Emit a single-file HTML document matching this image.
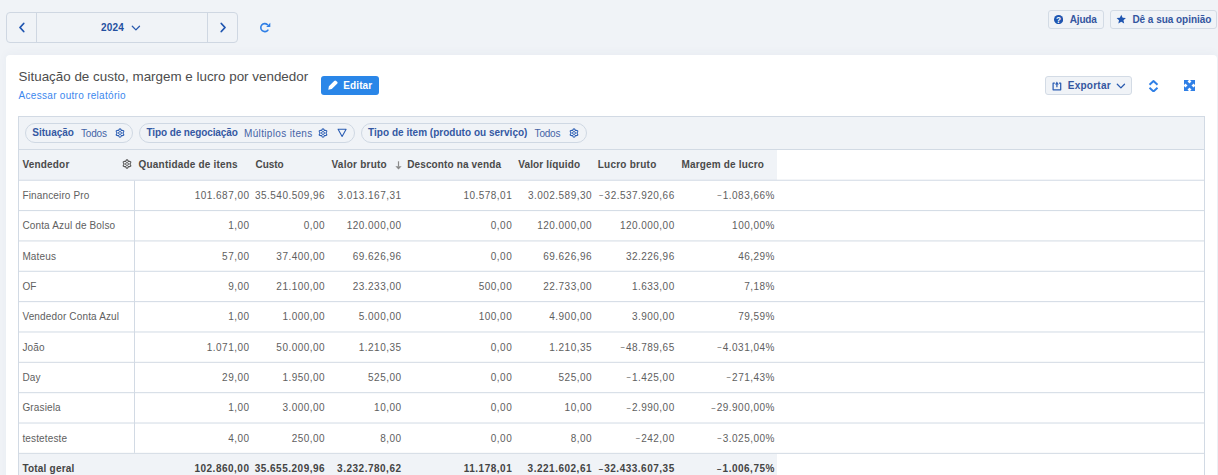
<!DOCTYPE html>
<html><head><meta charset="utf-8"><style>
*{margin:0;padding:0;box-sizing:border-box}
html,body{width:1218px;height:475px;overflow:hidden;background:#f0f3f7;font-family:"Liberation Sans",sans-serif;position:relative}
.a{position:absolute;display:block}
.grp{position:absolute;left:6px;top:12px;width:232px;height:30.6px;border:1px solid #cfd7e2;border-radius:4px}
.vd{position:absolute;top:0;bottom:0;width:1px;background:#cfd7e2}
.card{position:absolute;left:6px;top:54.8px;width:1211px;height:460px;background:#fff;border-radius:4px;box-shadow:0 -2px 10px rgba(60,80,120,.04)}
.title{position:absolute;left:18.6px;top:69px;font-size:13.4px;letter-spacing:0px;color:#4d4d4d;white-space:nowrap;line-height:15px}
.link{position:absolute;left:18.6px;top:89.7px;font-size:10px;letter-spacing:0.29px;color:#3b87ee;white-space:nowrap;line-height:12px}
.btn{position:absolute;border:1px solid #d3dbe5;border-radius:3px;background:#f0f3f7}
.bt{position:absolute;font-size:10px;font-weight:bold;color:#3456a0;line-height:12px;white-space:nowrap}
.tbl{position:absolute;left:18px;top:116px;width:1187px;height:400px;border:1px solid #d2dae4;background:#fff}
.fbar{position:absolute;left:19px;top:117px;width:1185px;height:32px;background:#f0f3f7}
.hdr{position:absolute;left:19px;top:150px;width:758px;height:30px;background:#f0f3f7}
.hl{position:absolute;left:19px;width:1185px;height:1px;background:#d2dae4}
.chip{position:absolute;top:123px;height:19.5px;border:1px solid #cfd8e3;border-radius:10px}
.t{position:absolute;font-size:10px;line-height:12px;color:#606060;white-space:nowrap}
.b{font-weight:bold;color:#444}
.mn{font-size:8px;position:relative;top:-0.6px;margin-right:0.4px}
.h{position:absolute;font-size:10px;line-height:12px;color:#4a4a4a;font-weight:bold;white-space:nowrap;top:159px}
.cl{position:absolute;font-size:10px;line-height:12px;color:#3459a3;font-weight:bold;white-space:nowrap;top:127px}
.cv{position:absolute;font-size:10px;line-height:12px;color:#4563a6;white-space:nowrap;top:127.5px}
</style></head><body>
<div class="grp"><div class="vd" style="left:29px"></div><div class="vd" style="left:199.5px"></div></div>
<svg class="a" style="left:18px;top:22px" width="8" height="11" viewBox="0 0 8 11"><path d="M5.7 1.5L2 5.5 5.7 9.5" fill="none" stroke="#1f55b0" stroke-width="1.8" stroke-linecap="round" stroke-linejoin="round"/></svg>
<div class="bt" style="left:101px;top:21.5px;color:#2450a0;letter-spacing:0.23px">2024</div>
<svg class="a" style="left:131.3px;top:24.5px" width="10" height="7" viewBox="0 0 10 7"><path d="M1.3 1.3L4.9 4.9 8.5 1.3" fill="none" stroke="#2a5aae" stroke-width="1.3" stroke-linecap="round" stroke-linejoin="round"/></svg>
<svg class="a" style="left:218.5px;top:22px" width="8" height="11" viewBox="0 0 8 11"><path d="M2.3 1.5L6 5.5 2.3 9.5" fill="none" stroke="#1f55b0" stroke-width="1.8" stroke-linecap="round" stroke-linejoin="round"/></svg>
<svg class="a" style="left:258.5px;top:21.8px" width="13" height="12" viewBox="0 0 13 12"><path d="M8.86 8.17A4 4 0 1 1 8.37 2.54" fill="none" stroke="#2f7fe6" stroke-width="1.6" stroke-linecap="round"/><path d="M7.2 5H11.3V0.8z" fill="#2f7fe6"/></svg>

<div class="btn" style="left:1048px;top:10px;width:56px;height:18.5px"></div>
<svg class="a" style="left:1054.2px;top:14.6px" width="9.2" height="9.2" viewBox="0 0 10 10"><circle cx="5" cy="5" r="5" fill="#1f55b0"/><text x="5" y="8.4" font-size="9" font-weight="bold" text-anchor="middle" fill="#fff" font-family="Liberation Sans">?</text></svg>
<div class="bt" style="left:1069.7px;top:13.5px;letter-spacing:-0.15px">Ajuda</div>
<div class="btn" style="left:1110px;top:10px;width:106.6px;height:18.5px"></div>
<svg class="a" style="left:1116px;top:13.8px" width="10.5" height="10.5" viewBox="0 0 24 24"><path d="M12 1.5l3.2 6.9 7.5.8-5.6 5.1 1.6 7.4L12 17.9 5.3 21.7l1.6-7.4L1.3 9.2l7.5-.8z" fill="#1f55b0"/></svg>
<div class="bt" style="left:1132.4px;top:13.5px;letter-spacing:-0.03px">Dê a sua opinião</div>

<div class="card"></div>
<div class="title">Situação de custo, margem e lucro por vendedor</div>
<div class="link">Acessar outro relatório</div>
<div class="a" style="left:321px;top:76.4px;width:58px;height:18.6px;background:#2a86e8;border-radius:3px"></div>
<svg class="a" style="left:327.6px;top:80.4px" width="10" height="10" viewBox="0 0 10 10"><path d="M0.3 9.7L0.9 6.2 6.2 0.9Q7.2 -0.1 8.2 0.9L9.1 1.8Q10.1 2.8 9.1 3.8L3.8 9.1z" fill="#fff"/></svg>
<div class="bt" style="left:343.3px;top:80px;color:#fff;letter-spacing:0.1px">Editar</div>

<div class="btn" style="left:1045.4px;top:76.2px;width:86.5px;height:18.5px"></div>
<svg class="a" style="left:1051.5px;top:80.5px" width="10" height="10" viewBox="0 0 10 10"><path d="M2.8 2.2H1.1V8.8H8.7V2.2H7" fill="none" stroke="#2b5db3" stroke-width="1.25" stroke-linejoin="round"/><path d="M4.9 6.3V2.5" fill="none" stroke="#2b5db3" stroke-width="1.25"/><path d="M3 3.4L4.9 0.6 6.8 3.4z" fill="#2b5db3"/></svg>
<div class="bt" style="left:1067.8px;top:79.8px;letter-spacing:0.24px">Exportar</div>
<svg class="a" style="left:1115.5px;top:83px" width="10" height="7" viewBox="0 0 10 7"><path d="M1.3 1.3L4.9 4.9 8.5 1.3" fill="none" stroke="#2a5aae" stroke-width="1.3" stroke-linecap="round" stroke-linejoin="round"/></svg>
<svg class="a" style="left:1148px;top:79.5px" width="11" height="12.5" viewBox="0 0 11 12.5"><path d="M1.5 4.8L5.5 1 9.5 4.8M1.5 7.7L5.5 11.5 9.5 7.7" fill="none" stroke="#2f7fe6" stroke-width="1.9" stroke-linejoin="round"/></svg>
<svg class="a" style="left:1184px;top:80px" width="11" height="11" viewBox="0 0 11 11"><path d="M0 0h5L0 5zM11 0v5L6 0zM0 11V6L5 11zM11 11H6L11 6z" fill="#2f7fe6"/><path d="M1.5 1.5L9.5 9.5M9.5 1.5L1.5 9.5" stroke="#2f7fe6" stroke-width="3"/></svg>

<div class="tbl"></div>
<div class="fbar"></div>
<div class="hl" style="top:149px"></div>
<div class="chip" style="left:25px;width:107.5px"></div>
<div class="cl" style="left:32.3px;letter-spacing:0px">Situação</div>
<div class="cv" style="left:81px;letter-spacing:-0.2px">Todos</div>
<svg class="a" style="left:114.7px;top:127.6px" width="10" height="10" viewBox="0 0 10 10"><path d="M5.00 0.80 L5.36 0.90 L5.68 1.16 L5.93 1.52 L6.13 1.90 L6.30 2.21 L6.50 2.40 L6.77 2.48 L7.12 2.47 L7.55 2.45 L7.99 2.49 L8.37 2.64 L8.64 2.90 L8.73 3.26 L8.66 3.67 L8.48 4.07 L8.25 4.43 L8.07 4.73 L8.00 5.00 L8.07 5.27 L8.25 5.57 L8.48 5.93 L8.66 6.33 L8.73 6.74 L8.64 7.10 L8.37 7.36 L7.99 7.51 L7.55 7.55 L7.12 7.53 L6.77 7.52 L6.50 7.60 L6.30 7.79 L6.13 8.10 L5.93 8.48 L5.68 8.84 L5.36 9.10 L5.00 9.20 L4.64 9.10 L4.32 8.84 L4.07 8.48 L3.87 8.10 L3.70 7.79 L3.50 7.60 L3.23 7.52 L2.88 7.53 L2.45 7.55 L2.01 7.51 L1.63 7.36 L1.36 7.10 L1.27 6.74 L1.34 6.33 L1.52 5.93 L1.75 5.57 L1.93 5.27 L2.00 5.00 L1.93 4.73 L1.75 4.43 L1.52 4.07 L1.34 3.67 L1.27 3.26 L1.36 2.90 L1.63 2.64 L2.01 2.49 L2.45 2.45 L2.88 2.47 L3.23 2.48 L3.50 2.40 L3.70 2.21 L3.87 1.90 L4.07 1.52 L4.32 1.16 L4.64 0.90 L5.00 0.80Z" fill="none" stroke="#2b5db3" stroke-width="1.15"/><circle cx="5" cy="5" r="1.45" fill="none" stroke="#2b5db3" stroke-width="0.95"/></svg>
<div class="chip" style="left:139px;width:215.5px"></div>
<div class="cl" style="left:146.5px;letter-spacing:-0.11px">Tipo de negociação</div>
<div class="cv" style="left:244px;letter-spacing:0.35px">Múltiplos itens</div>
<svg class="a" style="left:318.4px;top:127.6px" width="10" height="10" viewBox="0 0 10 10"><path d="M5.00 0.80 L5.36 0.90 L5.68 1.16 L5.93 1.52 L6.13 1.90 L6.30 2.21 L6.50 2.40 L6.77 2.48 L7.12 2.47 L7.55 2.45 L7.99 2.49 L8.37 2.64 L8.64 2.90 L8.73 3.26 L8.66 3.67 L8.48 4.07 L8.25 4.43 L8.07 4.73 L8.00 5.00 L8.07 5.27 L8.25 5.57 L8.48 5.93 L8.66 6.33 L8.73 6.74 L8.64 7.10 L8.37 7.36 L7.99 7.51 L7.55 7.55 L7.12 7.53 L6.77 7.52 L6.50 7.60 L6.30 7.79 L6.13 8.10 L5.93 8.48 L5.68 8.84 L5.36 9.10 L5.00 9.20 L4.64 9.10 L4.32 8.84 L4.07 8.48 L3.87 8.10 L3.70 7.79 L3.50 7.60 L3.23 7.52 L2.88 7.53 L2.45 7.55 L2.01 7.51 L1.63 7.36 L1.36 7.10 L1.27 6.74 L1.34 6.33 L1.52 5.93 L1.75 5.57 L1.93 5.27 L2.00 5.00 L1.93 4.73 L1.75 4.43 L1.52 4.07 L1.34 3.67 L1.27 3.26 L1.36 2.90 L1.63 2.64 L2.01 2.49 L2.45 2.45 L2.88 2.47 L3.23 2.48 L3.50 2.40 L3.70 2.21 L3.87 1.90 L4.07 1.52 L4.32 1.16 L4.64 0.90 L5.00 0.80Z" fill="none" stroke="#2b5db3" stroke-width="1.15"/><circle cx="5" cy="5" r="1.45" fill="none" stroke="#2b5db3" stroke-width="0.95"/></svg>
<svg class="a" style="left:336.5px;top:128px" width="10" height="10" viewBox="0 0 10 10"><path d="M1.1 1.3H9.1L5.1 8.4Z" fill="none" stroke="#2b5db3" stroke-width="1.1" stroke-linejoin="round"/></svg>
<div class="chip" style="left:361px;width:225.7px"></div>
<div class="cl" style="left:368.1px;letter-spacing:0.02px">Tipo de item (produto ou serviço)</div>
<div class="cv" style="left:534.6px;letter-spacing:-0.2px">Todos</div>
<svg class="a" style="left:568.5px;top:127.6px" width="10" height="10" viewBox="0 0 10 10"><path d="M5.00 0.80 L5.36 0.90 L5.68 1.16 L5.93 1.52 L6.13 1.90 L6.30 2.21 L6.50 2.40 L6.77 2.48 L7.12 2.47 L7.55 2.45 L7.99 2.49 L8.37 2.64 L8.64 2.90 L8.73 3.26 L8.66 3.67 L8.48 4.07 L8.25 4.43 L8.07 4.73 L8.00 5.00 L8.07 5.27 L8.25 5.57 L8.48 5.93 L8.66 6.33 L8.73 6.74 L8.64 7.10 L8.37 7.36 L7.99 7.51 L7.55 7.55 L7.12 7.53 L6.77 7.52 L6.50 7.60 L6.30 7.79 L6.13 8.10 L5.93 8.48 L5.68 8.84 L5.36 9.10 L5.00 9.20 L4.64 9.10 L4.32 8.84 L4.07 8.48 L3.87 8.10 L3.70 7.79 L3.50 7.60 L3.23 7.52 L2.88 7.53 L2.45 7.55 L2.01 7.51 L1.63 7.36 L1.36 7.10 L1.27 6.74 L1.34 6.33 L1.52 5.93 L1.75 5.57 L1.93 5.27 L2.00 5.00 L1.93 4.73 L1.75 4.43 L1.52 4.07 L1.34 3.67 L1.27 3.26 L1.36 2.90 L1.63 2.64 L2.01 2.49 L2.45 2.45 L2.88 2.47 L3.23 2.48 L3.50 2.40 L3.70 2.21 L3.87 1.90 L4.07 1.52 L4.32 1.16 L4.64 0.90 L5.00 0.80Z" fill="none" stroke="#2b5db3" stroke-width="1.15"/><circle cx="5" cy="5" r="1.45" fill="none" stroke="#2b5db3" stroke-width="0.95"/></svg>

<div class="hdr"></div>
<div class="h" style="left:22.4px;letter-spacing:0.19px">Vendedor</div>
<svg class="a" style="left:122.4px;top:159.4px" width="10" height="10" viewBox="0 0 10 10"><path d="M5.00 0.80 L5.36 0.90 L5.68 1.16 L5.93 1.52 L6.13 1.90 L6.30 2.21 L6.50 2.40 L6.77 2.48 L7.12 2.47 L7.55 2.45 L7.99 2.49 L8.37 2.64 L8.64 2.90 L8.73 3.26 L8.66 3.67 L8.48 4.07 L8.25 4.43 L8.07 4.73 L8.00 5.00 L8.07 5.27 L8.25 5.57 L8.48 5.93 L8.66 6.33 L8.73 6.74 L8.64 7.10 L8.37 7.36 L7.99 7.51 L7.55 7.55 L7.12 7.53 L6.77 7.52 L6.50 7.60 L6.30 7.79 L6.13 8.10 L5.93 8.48 L5.68 8.84 L5.36 9.10 L5.00 9.20 L4.64 9.10 L4.32 8.84 L4.07 8.48 L3.87 8.10 L3.70 7.79 L3.50 7.60 L3.23 7.52 L2.88 7.53 L2.45 7.55 L2.01 7.51 L1.63 7.36 L1.36 7.10 L1.27 6.74 L1.34 6.33 L1.52 5.93 L1.75 5.57 L1.93 5.27 L2.00 5.00 L1.93 4.73 L1.75 4.43 L1.52 4.07 L1.34 3.67 L1.27 3.26 L1.36 2.90 L1.63 2.64 L2.01 2.49 L2.45 2.45 L2.88 2.47 L3.23 2.48 L3.50 2.40 L3.70 2.21 L3.87 1.90 L4.07 1.52 L4.32 1.16 L4.64 0.90 L5.00 0.80Z" fill="none" stroke="#5a5a5a" stroke-width="1.2"/><circle cx="5" cy="5" r="1.45" fill="none" stroke="#5a5a5a" stroke-width="0.95"/></svg>
<div class="h" style="left:138.6px;letter-spacing:0.19px">Quantidade de itens</div>
<div class="h" style="left:255.6px;letter-spacing:-0.05px">Custo</div>
<div class="h" style="left:331.5px;letter-spacing:0.24px">Valor bruto</div>
<svg class="a" style="left:394.8px;top:161px" width="7" height="9" viewBox="0 0 7 9"><path d="M3.5 0.3V5.5" fill="none" stroke="#8a8a8a" stroke-width="1.2"/><path d="M0.4 5.2H6.6L3.5 8.6z" fill="#8a8a8a"/></svg>
<div class="h" style="left:407.2px;letter-spacing:0.13px">Desconto na venda</div>
<div class="h" style="left:518.2px;letter-spacing:0.15px">Valor líquido</div>
<div class="h" style="left:597.7px;letter-spacing:0.25px">Lucro bruto</div>
<div class="h" style="left:681.4px;letter-spacing:0.18px">Margem de lucro</div>

<svg class="a" style="left:0;top:0" width="1218" height="475"><rect x="19" y="453.86" width="758" height="30" fill="#f0f3f7"/><rect x="19" y="179.74" width="1185" height="1" fill="#d2dae4"/><rect x="19" y="210.09" width="1185" height="1" fill="#d2dae4"/><rect x="19" y="240.43" width="1185" height="1" fill="#d2dae4"/><rect x="19" y="270.78" width="1185" height="1" fill="#d2dae4"/><rect x="19" y="301.13" width="1185" height="1" fill="#d2dae4"/><rect x="19" y="331.48" width="1185" height="1" fill="#d2dae4"/><rect x="19" y="361.82" width="1185" height="1" fill="#d2dae4"/><rect x="19" y="392.17" width="1185" height="1" fill="#d2dae4"/><rect x="19" y="422.52" width="1185" height="1" fill="#d2dae4"/><rect x="19" y="452.86" width="1185" height="1" fill="#d2dae4"/><rect x="134" y="180.74" width="1" height="272.12" fill="#d2dae4"/></svg>
<div class="t" style="left:22.4px;top:190.0px;letter-spacing:0.15px">Financeiro Pro</div><div class="t" style="right:968.53px;top:190.0px;letter-spacing:0.47px">101.687,00</div><div class="t" style="right:892.93px;top:190.0px;letter-spacing:0.47px">35.540.509,96</div><div class="t" style="right:816.53px;top:190.0px;letter-spacing:0.47px">3.013.167,31</div><div class="t" style="right:705.83px;top:190.0px;letter-spacing:0.47px">10.578,01</div><div class="t" style="right:626.03px;top:190.0px;letter-spacing:0.47px">3.002.589,30</div><div class="t" style="right:543.33px;top:190.0px;letter-spacing:0.47px"><span class="mn">&#8722;</span>32.537.920,66</div><div class="t" style="right:443.13px;top:190.0px;letter-spacing:0.47px"><span class="mn">&#8722;</span>1.083,66%</div><div class="t" style="left:22.4px;top:220.35px;letter-spacing:0.15px">Conta Azul de Bolso</div><div class="t" style="right:968.53px;top:220.35px;letter-spacing:0.47px">1,00</div><div class="t" style="right:892.93px;top:220.35px;letter-spacing:0.47px">0,00</div><div class="t" style="right:816.53px;top:220.35px;letter-spacing:0.47px">120.000,00</div><div class="t" style="right:705.83px;top:220.35px;letter-spacing:0.47px">0,00</div><div class="t" style="right:626.03px;top:220.35px;letter-spacing:0.47px">120.000,00</div><div class="t" style="right:543.33px;top:220.35px;letter-spacing:0.47px">120.000,00</div><div class="t" style="right:443.13px;top:220.35px;letter-spacing:0.47px">100,00%</div><div class="t" style="left:22.4px;top:250.69px;letter-spacing:0.15px">Mateus</div><div class="t" style="right:968.53px;top:250.69px;letter-spacing:0.47px">57,00</div><div class="t" style="right:892.93px;top:250.69px;letter-spacing:0.47px">37.400,00</div><div class="t" style="right:816.53px;top:250.69px;letter-spacing:0.47px">69.626,96</div><div class="t" style="right:705.83px;top:250.69px;letter-spacing:0.47px">0,00</div><div class="t" style="right:626.03px;top:250.69px;letter-spacing:0.47px">69.626,96</div><div class="t" style="right:543.33px;top:250.69px;letter-spacing:0.47px">32.226,96</div><div class="t" style="right:443.13px;top:250.69px;letter-spacing:0.47px">46,29%</div><div class="t" style="left:22.4px;top:281.04px;letter-spacing:0.15px">OF</div><div class="t" style="right:968.53px;top:281.04px;letter-spacing:0.47px">9,00</div><div class="t" style="right:892.93px;top:281.04px;letter-spacing:0.47px">21.100,00</div><div class="t" style="right:816.53px;top:281.04px;letter-spacing:0.47px">23.233,00</div><div class="t" style="right:705.83px;top:281.04px;letter-spacing:0.47px">500,00</div><div class="t" style="right:626.03px;top:281.04px;letter-spacing:0.47px">22.733,00</div><div class="t" style="right:543.33px;top:281.04px;letter-spacing:0.47px">1.633,00</div><div class="t" style="right:443.13px;top:281.04px;letter-spacing:0.47px">7,18%</div><div class="t" style="left:22.4px;top:311.39px;letter-spacing:0.15px">Vendedor Conta Azul</div><div class="t" style="right:968.53px;top:311.39px;letter-spacing:0.47px">1,00</div><div class="t" style="right:892.93px;top:311.39px;letter-spacing:0.47px">1.000,00</div><div class="t" style="right:816.53px;top:311.39px;letter-spacing:0.47px">5.000,00</div><div class="t" style="right:705.83px;top:311.39px;letter-spacing:0.47px">100,00</div><div class="t" style="right:626.03px;top:311.39px;letter-spacing:0.47px">4.900,00</div><div class="t" style="right:543.33px;top:311.39px;letter-spacing:0.47px">3.900,00</div><div class="t" style="right:443.13px;top:311.39px;letter-spacing:0.47px">79,59%</div><div class="t" style="left:22.4px;top:341.74px;letter-spacing:0.15px">João</div><div class="t" style="right:968.53px;top:341.74px;letter-spacing:0.47px">1.071,00</div><div class="t" style="right:892.93px;top:341.74px;letter-spacing:0.47px">50.000,00</div><div class="t" style="right:816.53px;top:341.74px;letter-spacing:0.47px">1.210,35</div><div class="t" style="right:705.83px;top:341.74px;letter-spacing:0.47px">0,00</div><div class="t" style="right:626.03px;top:341.74px;letter-spacing:0.47px">1.210,35</div><div class="t" style="right:543.33px;top:341.74px;letter-spacing:0.47px"><span class="mn">&#8722;</span>48.789,65</div><div class="t" style="right:443.13px;top:341.74px;letter-spacing:0.47px"><span class="mn">&#8722;</span>4.031,04%</div><div class="t" style="left:22.4px;top:372.08px;letter-spacing:0.15px">Day</div><div class="t" style="right:968.53px;top:372.08px;letter-spacing:0.47px">29,00</div><div class="t" style="right:892.93px;top:372.08px;letter-spacing:0.47px">1.950,00</div><div class="t" style="right:816.53px;top:372.08px;letter-spacing:0.47px">525,00</div><div class="t" style="right:705.83px;top:372.08px;letter-spacing:0.47px">0,00</div><div class="t" style="right:626.03px;top:372.08px;letter-spacing:0.47px">525,00</div><div class="t" style="right:543.33px;top:372.08px;letter-spacing:0.47px"><span class="mn">&#8722;</span>1.425,00</div><div class="t" style="right:443.13px;top:372.08px;letter-spacing:0.47px"><span class="mn">&#8722;</span>271,43%</div><div class="t" style="left:22.4px;top:402.43px;letter-spacing:0.15px">Grasiela</div><div class="t" style="right:968.53px;top:402.43px;letter-spacing:0.47px">1,00</div><div class="t" style="right:892.93px;top:402.43px;letter-spacing:0.47px">3.000,00</div><div class="t" style="right:816.53px;top:402.43px;letter-spacing:0.47px">10,00</div><div class="t" style="right:705.83px;top:402.43px;letter-spacing:0.47px">0,00</div><div class="t" style="right:626.03px;top:402.43px;letter-spacing:0.47px">10,00</div><div class="t" style="right:543.33px;top:402.43px;letter-spacing:0.47px"><span class="mn">&#8722;</span>2.990,00</div><div class="t" style="right:443.13px;top:402.43px;letter-spacing:0.47px"><span class="mn">&#8722;</span>29.900,00%</div><div class="t" style="left:22.4px;top:432.78px;letter-spacing:0.15px">testeteste</div><div class="t" style="right:968.53px;top:432.78px;letter-spacing:0.47px">4,00</div><div class="t" style="right:892.93px;top:432.78px;letter-spacing:0.47px">250,00</div><div class="t" style="right:816.53px;top:432.78px;letter-spacing:0.47px">8,00</div><div class="t" style="right:705.83px;top:432.78px;letter-spacing:0.47px">0,00</div><div class="t" style="right:626.03px;top:432.78px;letter-spacing:0.47px">8,00</div><div class="t" style="right:543.33px;top:432.78px;letter-spacing:0.47px"><span class="mn">&#8722;</span>242,00</div><div class="t" style="right:443.13px;top:432.78px;letter-spacing:0.47px"><span class="mn">&#8722;</span>3.025,00%</div><div class="t b" style="left:22.4px;top:463.12px;letter-spacing:0.21px">Total geral</div><div class="t b" style="right:968.50px;top:463.12px;letter-spacing:0.5px">102.860,00</div><div class="t b" style="right:892.90px;top:463.12px;letter-spacing:0.5px">35.655.209,96</div><div class="t b" style="right:816.50px;top:463.12px;letter-spacing:0.5px">3.232.780,62</div><div class="t b" style="right:705.80px;top:463.12px;letter-spacing:0.5px">11.178,01</div><div class="t b" style="right:626.00px;top:463.12px;letter-spacing:0.5px">3.221.602,61</div><div class="t b" style="right:543.30px;top:463.12px;letter-spacing:0.5px"><span class="mn">&#8722;</span>32.433.607,35</div><div class="t b" style="right:443.10px;top:463.12px;letter-spacing:0.5px"><span class="mn">&#8722;</span>1.006,75%</div>
</body></html>
